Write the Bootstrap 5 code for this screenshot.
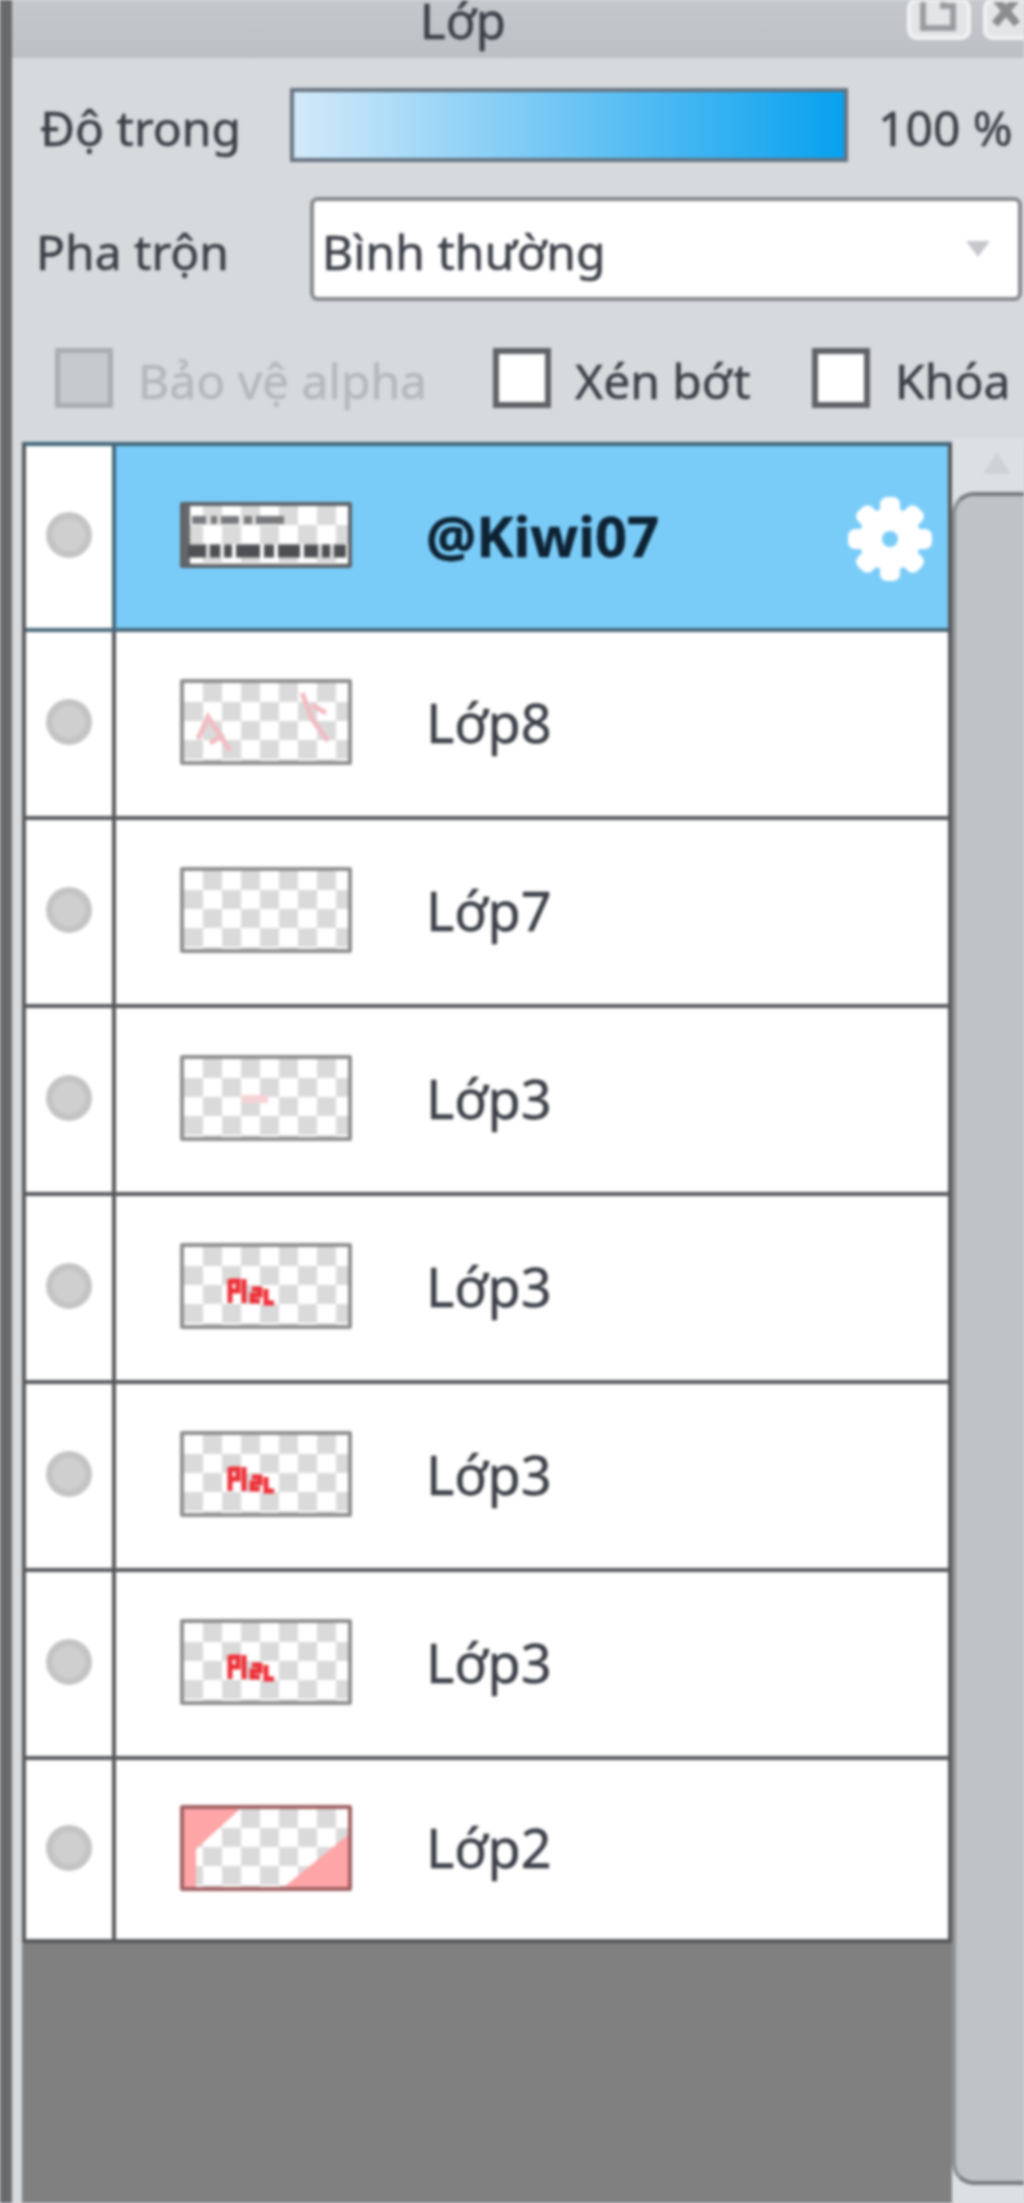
<!DOCTYPE html>
<html lang="vi">
<head>
    <meta charset="UTF-8">
    <title>Lớp</title>
    <link href="https://cdn.jsdelivr.net/npm/bootstrap@5.3.0/dist/css/bootstrap.min.css" rel="stylesheet">
    <style>
        html, body { height: 100%; overflow: hidden; }
        body { background: #d6dadd; font-family: "Noto Sans", "Liberation Sans", sans-serif; color: #3a3e46; }
        .panel-wrap { width: 1024px; height: 2203px; border-left: 12px solid #68696b; filter: blur(1.4px); overflow: hidden; -webkit-text-stroke: 0.5px currentColor; }
        .title-bar { height: 58px; flex: none; background: linear-gradient(#c4c8cc, #bcc0c4); font-size: 49px; line-height: 40px; }
        .title-text { margin-left: 408px; }
        .title-btn { width: 64px; height: 42px; margin-top: -2px; background: #e2e4e6; border: 4px solid #f1f2f3; border-radius: 10px; flex: none; }
        .title-btn svg { display: block; width: 100%; height: 100%; }
        .tb-page { margin-left: 401px; }
        .tb-shut { margin-left: 12px; }
        .opts { font-size: 48px; line-height: 1; height: 384px; flex: none; }
        .opt-row { white-space: nowrap; }
        .opt-row > span, .blend-box > span { padding-top: 5px; }
        .opt-1 { height: 74px; margin-top: 30px; padding-left: 28px; }
        .label-1 { width: 250px; flex: none; }
        .opacity-bar { width: 558px; height: 74px; border: 4px solid #66727e; background: linear-gradient(90deg, #d3e9f9, #07a1ef); flex: none; }
        .pct-text { margin-left: 30px; }
        .opt-2 { height: 104px; margin-top: 35px; padding-left: 24px; }
        .label-2 { width: 274px; flex: none; }
        .blend-box { width: 712px; height: 104px; background: #fff; border: 4px solid #86888b; border-radius: 8px; padding-left: 8px; flex: none; }
        .blend-arrow { margin-left: auto; margin-right: 28px; width: 0; border-left: 12px solid transparent; border-right: 12px solid transparent; border-top: 16px solid #c4c7cb; }
        .opt-3 { height: 60px; margin-top: 47px; padding-left: 43px; }
        .chk { width: 58px; height: 60px; background: #fff; border: 6px solid #5f6164; flex: none; }
        .chk-off { background: #c5c9cc; border-color: #a9adb0; border-width: 5px; }
        .txt-off { color: #b4b8bb; width: 355px; margin-left: 25px; flex: none; }
        .txt-crop { width: 237px; margin-left: 24px; flex: none; }
        .txt-lock { margin-left: 25px; }
        .layers-area { position: relative; height: 1761px; flex: none; }
        .layers-col { width: 930px; height: 100%; margin-left: 10px; background: #808080; }
        .scroll-side { position: absolute; left: 940px; top: -4px; width: 72px; height: 1765px; background: #dde0e2; }
        .scroll-up { position: absolute; left: 31px; top: 14px; width: 0; border-left: 14px solid transparent; border-right: 14px solid transparent; border-bottom: 22px solid #cfd2d5; }
        .scroll-thumb { position: absolute; left: 0; top: 54px; width: 100%; height: 1693px; background: #bfc3c7; border: 4px solid #77797c; border-left-color: #8f9194; border-right: 0; border-radius: 22px 0 0 22px; }
        .layer-list { background: #fff; border: 4px solid #55575a; border-top-color: #3f6478; }
        .layer-row { height: 188px; border-bottom: 4px solid #55575a; }
        .layer-row:first-child { height: 186px; }
        .layer-row:last-child { border-bottom: 0; height: 179px; }
        .row-active { border-bottom-color: #47677a; }
        .eye-cell { width: 90px; border-right: 4px solid #55575a; padding-bottom: 4px; flex: none; }
        .eye-dot { width: 46px; height: 46px; border-radius: 50%; background: #cfcfcf; border: 7px solid #c4c4c4; }
        .layer-main { padding-left: 64px; padding-bottom: 4px; font-size: 54px; }
        .row-active .layer-main { background: #7accf8; font-weight: 700; font-size: 56px; color: #0d2233; }
        .row-active .eye-cell { border-right-color: #3f6478; }
        .thumb-box { width: 172px; height: 86px; border: 4px solid #8e8e8e; border-radius: 2px; flex: none; margin-right: 74px;
            background-color: #fff;
            background-image: conic-gradient(#dadada 25%, #fff 0 50%, #dadada 0 75%, #fff 0);
            background-size: 38px 38px; }
        .thumb-box svg { display: block; width: 100%; height: 100%; }
        .thumb-text { height: 66px; border-color: #5e6266; overflow: hidden; }
        .thumb-red { border-color: #a05f62; }
        .gear-icon { margin-left: auto; margin-right: 14px; margin-top: 8px; width: 88px; height: 88px; flex: none; }
    </style>
</head>
<body>
    <div class="panel-wrap d-flex flex-column">
        <div class="title-bar d-flex">
            <div class="title-text">Lớp</div>
            <div class="title-btn tb-page"><svg viewBox="0 0 56 34"><path d="M12 -6V26H42V4H32V-6" fill="none" stroke="#9a9c9f" stroke-width="6"/></svg></div>
            <div class="title-btn tb-shut"><svg viewBox="0 0 56 34"><path d="M8 -4L30 22M30 -4L8 22" fill="none" stroke="#8a8c8f" stroke-width="8"/></svg></div>
        </div>
        <div class="opts">
            <div class="opt-row opt-1 d-flex align-items-center">
                <span class="label-1">Độ trong</span>
                <div class="opacity-bar"></div>
                <span class="pct-text">100 %</span>
            </div>
            <div class="opt-row opt-2 d-flex align-items-center">
                <span class="label-2">Pha trộn</span>
                <div class="blend-box d-flex align-items-center">
                    <span>Bình thường</span>
                    <div class="blend-arrow"></div>
                </div>
            </div>
            <div class="opt-row opt-3 d-flex align-items-center">
                <div class="chk chk-off"></div>
                <span class="txt-off">Bảo vệ alpha</span>
                <div class="chk"></div>
                <span class="txt-crop">Xén bớt</span>
                <div class="chk"></div>
                <span class="txt-lock">Khóa</span>
            </div>
        </div>
        <div class="layers-area">
            <div class="layers-col">
                <div class="layer-list" id="layerList"></div>
            </div>
            <div class="scroll-side">
                <div class="scroll-up"></div>
                <div class="scroll-thumb"></div>
            </div>
        </div>
    </div>

    <script>
        // name, bold row and what sits on the thumbnail
        const red = '#ee3038';
        const sketch = '<svg viewBox="0 0 164 78"><path d="M14 56l10-22 12 18 10 16M26 60l14-8M118 10l10 26 16 22M128 22l14 8" fill="none" stroke="#f0bcc2" stroke-width="5"/></svg>';
        const faint = '<svg viewBox="0 0 164 78"><path d="M58 40h26" stroke="#f7d2d4" stroke-width="8"/></svg>';
        const mark = `<svg viewBox="0 0 164 78"><path d="M46 32v24M46 34h8v10h-8M60 32v24M68 42h8v6h-8v6h8M82 42v14h8" fill="none" stroke="${red}" stroke-width="5"/></svg>`;
        const corners = '<svg viewBox="0 0 164 78"><path d="M0 0H56L12 40V78H0ZM164 78H100L164 26Z" fill="#fda5a7"/></svg>';
        const names = '<svg viewBox="0 0 164 58"><path d="M0 0H6V58H0Z" fill="#66686b"/><path d="M8 14h14M27 14h6M37 14h18M60 14h8M72 14h28" stroke="#77797c" stroke-width="8"/><path d="M4 45h18M26 45h10M40 45h8M52 45h24M80 45h10M94 45h22M120 45h14M138 45h8M150 45h12" stroke="#4e5053" stroke-width="13"/></svg>';
        const tooth = '<rect x="34" y="2" width="20" height="84" rx="7"';
        const gear = `<svg class="gear-icon" viewBox="0 0 88 88"><g fill="#fff">${tooth}/>${tooth} transform="rotate(45 44 44)"/>${tooth} transform="rotate(90 44 44)"/>${tooth} transform="rotate(135 44 44)"/><circle cx="44" cy="44" r="31"/></g><circle cx="44" cy="44" r="8" fill="#7accf8"/></svg>`;

        const layers = [
            { name: '@Kiwi07', active: true, art: names },
            { name: 'Lớp8', art: sketch },
            { name: 'Lớp7', art: '' },
            { name: 'Lớp3', art: faint },
            { name: 'Lớp3', art: mark },
            { name: 'Lớp3', art: mark },
            { name: 'Lớp3', art: mark },
            { name: 'Lớp2', art: corners, warm: true }
        ];

        const list = document.getElementById('layerList');
        layers.forEach(layer => {
            const row = document.createElement('div');
            row.className = 'layer-row d-flex' + (layer.active ? ' row-active' : '');
            row.innerHTML = `
                <div class="eye-cell d-flex align-items-center justify-content-center"><div class="eye-dot"></div></div>
                <div class="layer-main flex-grow-1 d-flex align-items-center">
                    <div class="thumb-box${layer.active ? ' thumb-text' : ''}${layer.warm ? ' thumb-red' : ''}">${layer.art}</div>
                    <span>${layer.name}</span>
                    ${layer.active ? gear : ''}
                </div>`;
            list.appendChild(row);
        });
    </script>
    <script src="https://cdn.jsdelivr.net/npm/bootstrap@5.3.0/dist/js/bootstrap.bundle.min.js"></script>
</body>
</html>
